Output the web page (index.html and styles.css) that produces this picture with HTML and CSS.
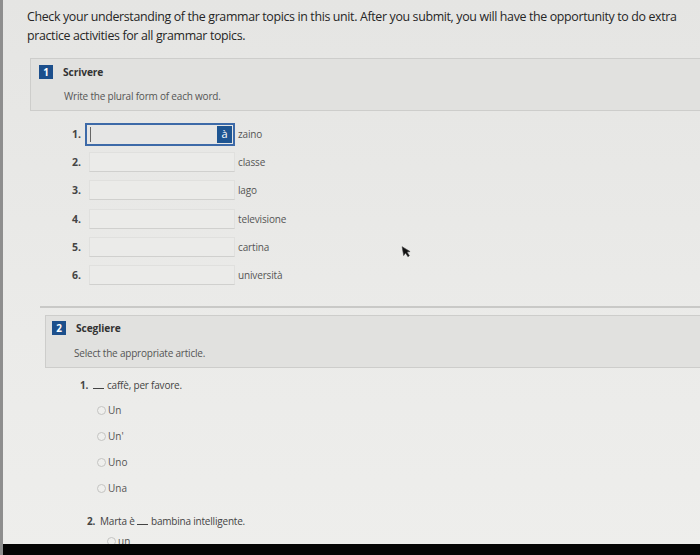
FILE: index.html
```html
<!DOCTYPE html>
<html lang="en">
<head>
<meta charset="utf-8">
<title>Grammar check</title>
<link rel="stylesheet" href="styles.css">
</head>
<body>
<div class="screen">
  <div class="page">
    <p class="intro">Check your understanding of the grammar topics in this unit. After you submit, you will have the opportunity to do extra practice activities for all grammar topics.</p>

    <section class="activity act1">
      <div class="act-head">
        <div class="title-row"><span class="badge">1</span><span class="act-title">Scrivere</span></div>
        <p class="act-desc">Write the plural form of each word.</p>
      </div>
      <ol class="fill-list">
        <li class="fill-row"><span class="num">1.</span><span class="field focused"><span class="caret"></span><span class="accent">à</span></span><span class="word">zaino</span></li>
        <li class="fill-row"><span class="num">2.</span><span class="field"></span><span class="word">classe</span></li>
        <li class="fill-row"><span class="num">3.</span><span class="field"></span><span class="word">lago</span></li>
        <li class="fill-row"><span class="num">4.</span><span class="field"></span><span class="word">televisione</span></li>
        <li class="fill-row"><span class="num">5.</span><span class="field"></span><span class="word">cartina</span></li>
        <li class="fill-row"><span class="num">6.</span><span class="field"></span><span class="word">università</span></li>
      </ol>
    </section>

    <div class="divider"></div>

    <section class="activity act2">
      <div class="act-head">
        <div class="title-row"><span class="badge">2</span><span class="act-title">Scegliere</span></div>
        <p class="act-desc">Select the appropriate article.</p>
      </div>
      <div class="question">
        <p class="q-text"><span class="qnum">1.</span><span class="blank"></span>caffè, per favore.</p>
        <ul class="options">
          <li class="opt"><span class="radio"></span>Un</li>
          <li class="opt"><span class="radio"></span>Un'</li>
          <li class="opt"><span class="radio"></span>Uno</li>
          <li class="opt"><span class="radio"></span>Una</li>
        </ul>
      </div>
      <div class="question q2">
        <p class="q-text"><span class="qnum">2.</span>Marta è <span class="blank"></span>bambina intelligente.</p>
        <ul class="options">
          <li class="opt"><span class="radio"></span>un</li>
        </ul>
      </div>
    </section>
  </div>
  <div class="bezel"></div>
  <svg class="pointer" width="9" height="13" viewBox="0 0 9 13" aria-hidden="true">
    <path d="M1 1 L1 10 L3.3 7.8 L5 11.8 L6.6 11.1 L4.9 7.2 L8 7.2 Z" fill="#111" stroke="#444" stroke-width="0.6"/>
  </svg>
</div>
</body>
</html>
```

FILE: styles.css
```css
* { box-sizing: border-box; }
html, body { margin: 0; padding: 0; }
body {
  width: 700px;
  height: 555px;
  overflow: hidden;
  background: #e9e9e7;
  font-family: "Open Sans", "Liberation Sans", sans-serif;
  color: #2a2a2a;
}
.screen {
  position: relative;
  height: 555px;
  display: flex;
  flex-direction: column;
  border-left: 3px solid #8e8e8e;
  background: linear-gradient(180deg, #e5e5e3 0%, #ebebe9 60%, #eeeeec 100%);
}
.page {
  flex: 1;
  overflow: hidden;
}
.bezel {
  height: 11px;
  background: #050505;
}
.pointer {
  position: absolute;
  left: 399px;
  top: 245px;
  transform: rotate(-10deg);
}
p { margin: 0; }
ol, ul { list-style: none; margin: 0; padding: 0; }

.intro {
  margin: 7px 20px 0 24px;
  font-size: 12.4px;
  line-height: 19px;
  letter-spacing: -0.35px;
  color: #262626;
}

.activity { margin-top: 13px; }
.act-head {
  margin-left: 27px;
  height: 53px;
  background: #e1e1df;
  border: 1px solid #cdcdcb;
  border-right: none;
  padding: 5px 0 0 8px;
}
.title-row {
  display: flex;
  align-items: center;
  gap: 10px;
  height: 15px;
}
.badge {
  width: 14px;
  height: 14px;
  background: #1c4f8c;
  color: #fff;
  font-weight: 700;
  font-size: 10px;
  line-height: 14px;
  text-align: center;
}
.act-title {
  font-weight: 700;
  font-size: 10.2px;
  letter-spacing: -0.1px;
  color: #333;
}
.act-desc {
  margin: 10px 0 0 25px;
  font-size: 10px;
  letter-spacing: -0.2px;
  color: #555;
}

.fill-list {
  margin: 12px 0 0 59px;
  display: flex;
  flex-direction: column;
  gap: 6.2px;
}
.fill-row {
  display: flex;
  align-items: center;
  height: 22px;
}
.num {
  width: 23px;
  text-align: right;
  padding-right: 4px;
  font-size: 10.5px;
  font-weight: 700;
  color: #444;
}
.field {
  width: 146px;
  height: 20px;
  margin-left: 4px;
  border: 1px solid #e0e0de;
  border-bottom-color: #d0d0ce;
  background: #ebebe9;
  display: flex;
  align-items: center;
  justify-content: space-between;
}
.field.focused {
  margin-left: 0;
  width: 150px;
  height: 23px;
  border: 2px solid #3d6aa8;
  background: #e6e6e5;
  padding: 0 1px 0 3px;
}
.caret {
  width: 1px;
  height: 15px;
  background: #666;
}
.accent {
  width: 15px;
  height: 17px;
  background: #1e5592;
  color: #fff;
  font-size: 11px;
  line-height: 15px;
  text-align: center;
}
.word {
  margin-left: 3px;
  font-size: 10px;
  letter-spacing: -0.15px;
  color: #555;
}

.divider {
  margin: 20px 0 0 37px;
  height: 2px;
  background: #c9c9c7;
}

.act2 { margin-top: 7px; }
.act2 .act-head { margin-left: 42px; padding-left: 6px; }
.act2 .act-desc { margin-left: 22px; }

.question { margin: 10px 0 0 77px; }
.q-text {
  font-size: 10px;
  letter-spacing: -0.2px;
  color: #444;
}
.qnum {
  display: inline-block;
  font-weight: 700;
  width: 13px;
}
.blank {
  display: inline-block;
  width: 11px;
  height: 1px;
  background: #444;
  margin-right: 3px;
  vertical-align: baseline;
}
.options {
  margin: 10px 0 0 17px;
  display: flex;
  flex-direction: column;
  gap: 9px;
}
.opt {
  display: flex;
  align-items: center;
  height: 17px;
  font-size: 10px;
  color: #555;
}
.radio {
  width: 9px;
  height: 9px;
  border: 1px solid #c4c4c2;
  border-radius: 50%;
  margin-right: 2px;
  background: #efefed;
}
.q2 { margin: 17px 0 0 84px; }
.q2 .options { margin: 5px 0 0 20px; }
```
